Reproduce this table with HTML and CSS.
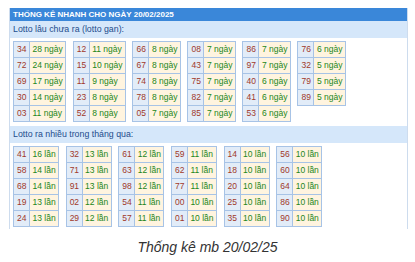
FILE: index.html
```html
<!DOCTYPE html>
<html lang="vi">
<head>
<meta charset="utf-8">
<link rel="stylesheet" href="styles.css">
</head>
<body>
<div class="box">
  <div class="head">THỐNG KÊ NHANH CHO NGÀY 20/02/2025</div>
  <div class="band">Lotto lâu chưa ra (lotto gan):</div>
  <div class="group">
    <table><tr><td class="n">34</td><td class="v">28 ngày</td></tr><tr><td class="n">72</td><td class="v">24 ngày</td></tr><tr><td class="n">69</td><td class="v">17 ngày</td></tr><tr><td class="n">30</td><td class="v">14 ngày</td></tr><tr><td class="n">03</td><td class="v">11 ngày</td></tr></table>
    <table><tr><td class="n">12</td><td class="v">11 ngày</td></tr><tr><td class="n">15</td><td class="v">10 ngày</td></tr><tr><td class="n">11</td><td class="v">9 ngày</td></tr><tr><td class="n">23</td><td class="v">8 ngày</td></tr><tr><td class="n">52</td><td class="v">8 ngày</td></tr></table>
    <table><tr><td class="n">66</td><td class="v">8 ngày</td></tr><tr><td class="n">67</td><td class="v">8 ngày</td></tr><tr><td class="n">74</td><td class="v">8 ngày</td></tr><tr><td class="n">78</td><td class="v">8 ngày</td></tr><tr><td class="n">05</td><td class="v">7 ngày</td></tr></table>
    <table><tr><td class="n">08</td><td class="v">7 ngày</td></tr><tr><td class="n">43</td><td class="v">7 ngày</td></tr><tr><td class="n">75</td><td class="v">7 ngày</td></tr><tr><td class="n">82</td><td class="v">7 ngày</td></tr><tr><td class="n">85</td><td class="v">7 ngày</td></tr></table>
    <table><tr><td class="n">86</td><td class="v">7 ngày</td></tr><tr><td class="n">97</td><td class="v">7 ngày</td></tr><tr><td class="n">40</td><td class="v">6 ngày</td></tr><tr><td class="n">41</td><td class="v">6 ngày</td></tr><tr><td class="n">53</td><td class="v">6 ngày</td></tr></table>
    <table><tr><td class="n">76</td><td class="v">6 ngày</td></tr><tr><td class="n">32</td><td class="v">5 ngày</td></tr><tr><td class="n">79</td><td class="v">5 ngày</td></tr><tr><td class="n">89</td><td class="v">5 ngày</td></tr></table>
  </div>
  <div class="band">Lotto ra nhiều trong tháng qua:</div>
  <div class="group last">
    <table><tr><td class="n">41</td><td class="v">16 lần</td></tr><tr><td class="n">58</td><td class="v">14 lần</td></tr><tr><td class="n">68</td><td class="v">14 lần</td></tr><tr><td class="n">19</td><td class="v">13 lần</td></tr><tr><td class="n">24</td><td class="v">13 lần</td></tr></table>
    <table><tr><td class="n">32</td><td class="v">13 lần</td></tr><tr><td class="n">71</td><td class="v">13 lần</td></tr><tr><td class="n">91</td><td class="v">13 lần</td></tr><tr><td class="n">02</td><td class="v">12 lần</td></tr><tr><td class="n">29</td><td class="v">12 lần</td></tr></table>
    <table><tr><td class="n">61</td><td class="v">12 lần</td></tr><tr><td class="n">63</td><td class="v">12 lần</td></tr><tr><td class="n">98</td><td class="v">12 lần</td></tr><tr><td class="n">54</td><td class="v">11 lần</td></tr><tr><td class="n">57</td><td class="v">11 lần</td></tr></table>
    <table><tr><td class="n">59</td><td class="v">11 lần</td></tr><tr><td class="n">62</td><td class="v">11 lần</td></tr><tr><td class="n">77</td><td class="v">11 lần</td></tr><tr><td class="n">00</td><td class="v">10 lần</td></tr><tr><td class="n">01</td><td class="v">10 lần</td></tr></table>
    <table><tr><td class="n">14</td><td class="v">10 lần</td></tr><tr><td class="n">18</td><td class="v">10 lần</td></tr><tr><td class="n">20</td><td class="v">10 lần</td></tr><tr><td class="n">25</td><td class="v">10 lần</td></tr><tr><td class="n">35</td><td class="v">10 lần</td></tr></table>
    <table><tr><td class="n">56</td><td class="v">10 lần</td></tr><tr><td class="n">60</td><td class="v">10 lần</td></tr><tr><td class="n">64</td><td class="v">10 lần</td></tr><tr><td class="n">86</td><td class="v">10 lần</td></tr><tr><td class="n">90</td><td class="v">10 lần</td></tr></table>
  </div>
</div>
<p class="caption">Thống kê mb 20/02/25</p>
</body>
</html>
```
FILE: styles.css
```css
html, body {
  margin: 0;
  padding: 0;
  background: #ffffff;
}
body {
  padding-top: 8px;
  font-family: "Liberation Sans", Arial, sans-serif;
}
.box {
  margin-left: 9px;
  width: 397px;
  border-left: 1px solid #cddcee;
  border-right: 1px solid #cddcee;
}
.head {
  background: #3a87d9;
  color: #ffffff;
  font-weight: bold;
  font-size: 8px;
  height: 13px;
  line-height: 13px;
  padding-left: 3px;
  white-space: nowrap;
}
.band {
  background: #d5e7fa;
  color: #1d4d8c;
  font-size: 8.8px;
  height: 17px;
  line-height: 17px;
  padding-left: 3px;
}
.group {
  display: flex;
  align-items: flex-start;
  gap: 6.5px;
  padding: 3px 0 4px 3px;
}
.group.last {
  padding-bottom: 2px;
}
table {
  border-collapse: collapse;
  font-size: 8.5px;
}
td {
  border: 1px solid #a7c3e6;
  height: 15px;
  line-height: 15px;
  white-space: nowrap;
}
td.n {
  background: #e2ecf8;
  color: #a0382a;
  padding: 0 2.5px 0 3px;
}
td.v {
  background: #fff4df;
  color: #23861a;
  padding: 0 2.5px 0 2.5px;
}
.caption {
  margin: 10px 0 0;
  text-align: center;
  font-style: italic;
  font-size: 14px;
  color: #333333;
}
```
